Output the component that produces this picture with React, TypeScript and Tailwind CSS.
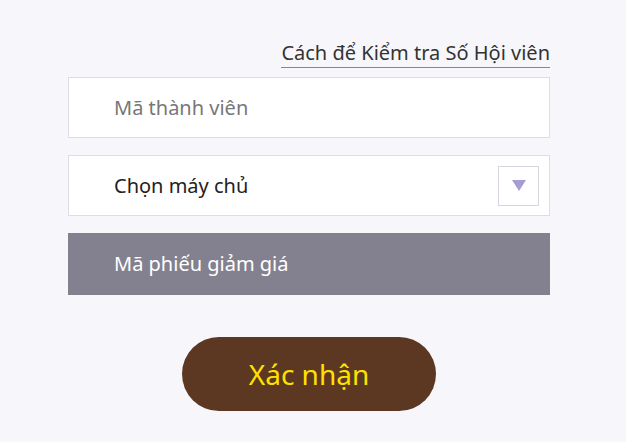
import React from "react";

export default function App() {
  return (
    <div className="w-[626px] h-[442px] bg-[#f7f7fb] overflow-hidden" style={{ fontFamily: '"Noto Sans", "Open Sans", sans-serif' }}>
      <div className="w-[482px] ml-[68px] pt-[39px] flex flex-col">
        <div className="flex justify-end">
          <span className="text-[20px] leading-[28px] text-[#333] border-b border-[#888]">Cách để Kiểm tra Số Hội viên</span>
        </div>
        <div className="mt-[9px] h-[61px] bg-white border border-[#dddde6] flex items-center pl-[45px]">
          <span className="text-[20px] text-[#777]">Mã thành viên</span>
        </div>
        <div className="mt-[17px] h-[61px] bg-white border border-[#dddde6] flex items-center pl-[45px] pr-[10px]">
          <span className="text-[20px] text-[#222] flex-1">Chọn máy chủ</span>
          <div className="w-[41px] h-[40px] border border-[#d6d6de] flex items-center justify-center">
            <svg width="14" height="11" viewBox="0 0 14 11"><polygon points="0,0 14,0 7,11" fill="#a59dd3" /></svg>
          </div>
        </div>
        <div className="mt-[17px] h-[62px] bg-[#83818f] flex items-center pl-[46px]">
          <span className="text-[20px] text-white">Mã phiếu giảm giá</span>
        </div>
        <div className="mt-[42px] flex justify-center">
          <div className="w-[254px] h-[74px] rounded-full bg-[#5c3822] flex items-center justify-center">
            <span className="text-[28px] text-[#ffe100]">Xác nhận</span>
          </div>
        </div>
      </div>
    </div>
  );
}
